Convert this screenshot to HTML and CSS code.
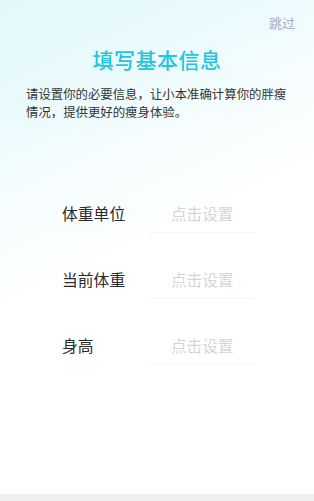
FILE: index.html
```html
<!DOCTYPE html>
<html lang="zh">
<head>
<meta charset="utf-8">
<link rel="stylesheet" href="styles.css">
</head>
<body>
<div class="page">
  <div class="topbar"><span class="skip">跳过</span></div>
  <h1 class="title">填写基本信息</h1>
  <p class="desc">请设置你的必要信息，让小本准确计算你的胖瘦情况，提供更好的瘦身体验。</p>
  <div class="form">
    <div class="row"><span class="label">体重单位</span><span class="value">点击设置</span></div>
    <div class="row"><span class="label">当前体重</span><span class="value">点击设置</span></div>
    <div class="row"><span class="label">身高</span><span class="value">点击设置</span></div>
  </div>
  <div class="spacer"></div>
  <div class="bottom"></div>
</div>
</body>
</html>
```
FILE: styles.css
```css
* { box-sizing: border-box; }
html, body { margin: 0; padding: 0; }
body {
  font-family: "Noto Sans CJK SC", "Noto Sans", sans-serif;
  width: 314px;
  height: 501px;
  overflow: hidden;
}
.page {
  width: 314px;
  height: 501px;
  display: flex;
  flex-direction: column;
  background: linear-gradient(155deg, #e1f8fb 0%, #edfbfd 22%, #f7fdfe 34%, #ffffff 50%);
}
.topbar {
  display: flex;
  justify-content: flex-end;
  padding: 13px 19px 0 0;
  height: 34px;
}
.skip {
  font-size: 13px;
  line-height: 20px;
  color: #a3abc2;
}
.title {
  margin: 10px 0 0;
  text-align: center;
  font-size: 21px;
  font-weight: 500;
  line-height: 30px;
  color: #1ec6df;
  letter-spacing: 0.5px;
}
.desc {
  margin: 11px 26px 0 26px;
  font-size: 12.4px;
  line-height: 18px;
  color: #333;
}
.form {
  margin-top: 73px;
  display: flex;
  flex-direction: column;
  gap: 28px;
}
.row {
  display: flex;
  align-items: center;
  height: 38px;
}
.label {
  width: 109px;
  padding-left: 62px;
  box-sizing: content-box;
  font-size: 15.8px;
  color: #2a2a2a;
  flex-shrink: 0;
}
.value {
  width: 106px;
  margin-left: -22px;
  padding: 8px 0 8px 22px;
  font-size: 15.6px;
  color: #d2d6dc;
  border-bottom: 1px solid #f5f6f7;
}
.spacer { flex: 1; }
.bottom {
  height: 7px;
  background: #f0f0f0;
}
```
